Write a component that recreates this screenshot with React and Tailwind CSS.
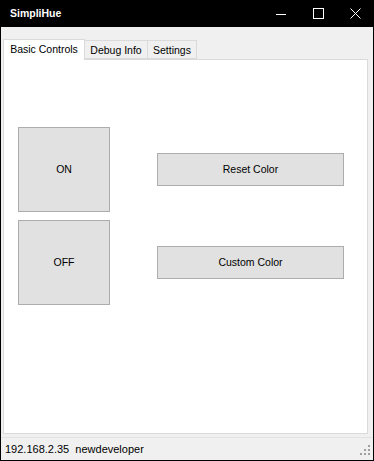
import React, { useState } from 'react';

const font = { fontFamily: '"Liberation Sans", Arial, sans-serif' };

const tabs = [
  { label: 'Basic Controls', w: 'w-[82px]' },
  { label: 'Debug Info', w: 'w-[64px]' },
  { label: 'Settings', w: 'w-[50px]' },
];

const Button = ({ className, children }) => (
  <button className={`flex items-center justify-center bg-[#e1e1e1] border border-[#adadad] text-[10.5px] text-black ${className}`}>
    {children}
  </button>
);

const App = () => {
  const [active, setActive] = useState(0);

  return (
    <div className="w-[374px] h-[461px] flex flex-col bg-[#f0f0f0] border-x border-b border-black text-black" style={font}>
      {/* title bar */}
      <header className="h-[27px] -mx-px bg-black text-white flex items-center shrink-0">
        <span className="pl-[10px] text-[10.5px] font-bold">SimpliHue</span>
        <div className="ml-auto flex items-center h-full pr-px">
          <div className="w-[36px] h-full flex items-center justify-center">
            <svg width="10" height="10" viewBox="0 0 10 10"><path d="M0 5.5h10" stroke="white" strokeWidth="1" /></svg>
          </div>
          <div className="w-[38px] h-full flex items-center justify-center">
            <svg width="11" height="11" viewBox="0 0 11 11"><rect x="0.5" y="0.5" width="10" height="10" fill="none" stroke="white" strokeWidth="1" /></svg>
          </div>
          <div className="w-[36px] h-full flex items-center justify-center">
            <svg width="11" height="11" viewBox="0 0 11 11"><path d="M0.5 0.5l10 10M10.5 0.5l-10 10" stroke="white" strokeWidth="1" /></svg>
          </div>
        </div>
      </header>

      {/* tabs */}
      <div className="flex items-end pl-[2px] pt-[12px] h-[32px] shrink-0">
        {tabs.map((t, i) =>
          i === active ? (
            <button
              key={t.label}
              onClick={() => setActive(i)}
              className={`${t.w} relative z-10 h-[21px] -mb-px ${i > 0 ? '-ml-px' : ''} bg-white border border-b-0 border-[#dadada] text-[10.5px] leading-none flex justify-center items-start pt-[4px] whitespace-nowrap`}
            >
              {t.label}
            </button>
          ) : (
            <button
              key={t.label}
              onClick={() => setActive(i)}
              className={`${t.w} h-[19px] -ml-px bg-[#f0f0f0] border border-[#dadada] text-[10.5px] leading-none flex justify-center items-start pt-[4px] whitespace-nowrap`}
            >
              {t.label}
            </button>
          )
        )}
      </div>

      {/* tab page */}
      <section className="ml-[2px] mr-[5px] h-[375px] bg-white border border-[#dadada] shrink-0">
        <div className="pl-[14px] pt-[67px] flex flex-col gap-[8px]">
          <div className="flex items-center gap-[47px]">
            <Button className="w-[92px] h-[85px]">ON</Button>
            <Button className="w-[187px] h-[33px]">Reset Color</Button>
          </div>
          <div className="flex items-center gap-[47px]">
            <Button className="w-[92px] h-[85px]">OFF</Button>
            <Button className="w-[187px] h-[33px]">Custom Color</Button>
          </div>
        </div>
      </section>

      {/* status bar */}
      <footer className="flex-1 mt-[3px] border-t border-[#e3e3e3] flex items-center relative">
        <span className="pl-[4px] pt-px text-[11px] whitespace-pre">192.168.2.35  newdeveloper</span>
        <div className="absolute right-[3px] bottom-[5px] grid grid-cols-3 gap-[2px]">
          {[0, 0, 1, 0, 1, 1, 1, 1, 1].map((v, i) => (
            <span key={i} className={`w-[2px] h-[2px] ${v ? 'bg-[#a0a0a0]' : ''}`} />
          ))}
        </div>
      </footer>
    </div>
  );
};

export default App;
